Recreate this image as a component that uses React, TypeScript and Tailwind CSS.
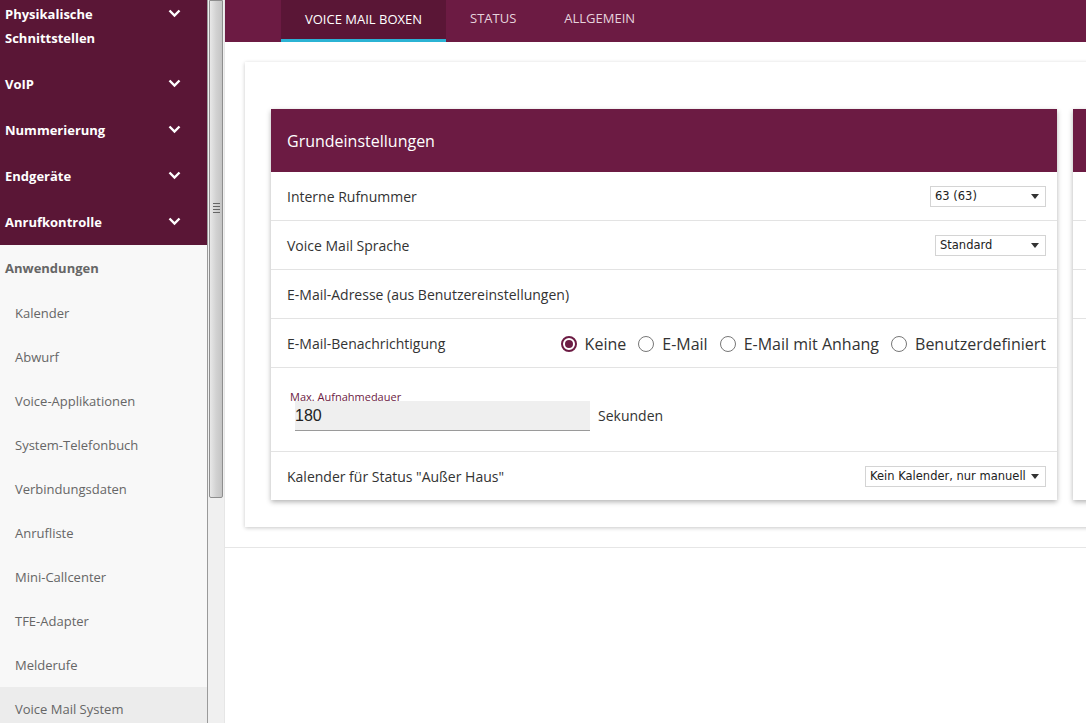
import React from "react";

const font = { fontFamily: '"Open Sans", "Noto Sans", sans-serif' };

const topItems = [
  { label: ["Physikalische", "Schnittstellen"] },
  { label: ["VoIP"] },
  { label: ["Nummerierung"] },
  { label: ["Endgeräte"] },
  { label: ["Anrufkontrolle"] },
];

const subItems = [
  "Kalender",
  "Abwurf",
  "Voice-Applikationen",
  "System-Telefonbuch",
  "Verbindungsdaten",
  "Anrufliste",
  "Mini-Callcenter",
  "TFE-Adapter",
  "Melderufe",
  "Voice Mail System",
];

function Chevron() {
  return (
    <svg width="13" height="9" viewBox="0 0 13 9" className="mt-[-7px]">
      <path d="M1.5 1.5 L6.5 6.5 L11.5 1.5" fill="none" stroke="white" strokeWidth="2.4" />
    </svg>
  );
}

function Select({ value, width }: { value: string; width: string }) {
  return (
    <div
      className={`flex h-[21px] items-center justify-between border border-[#d4d4d4] bg-white pl-[4px] pr-[6px] pt-[2px] leading-none text-[#222] ${width}`}
      style={{ fontFamily: '"DejaVu Sans", Verdana, sans-serif', fontSize: "11.5px" }}
    >
      <span>{value}</span>
      <svg width="8" height="5" viewBox="0 0 8 5" className="mb-[2px]">
        <path d="M0 0 L8 0 L4 5 Z" fill="#333" />
      </svg>
    </div>
  );
}

function Radio({ checked, label }: { checked?: boolean; label: string }) {
  return (
    <label className="flex items-center gap-[8px]">
      <span
        className={`flex h-[16px] w-[16px] items-center justify-center rounded-full border-2 ${
          checked ? "border-[#6c1b43]" : "border-[#777]"
        }`}
        style={{ borderWidth: checked ? 2 : 1.5 }}
      >
        {checked && <span className="h-[8px] w-[8px] rounded-full bg-[#6c1b43]" />}
      </span>
      <span className="text-[16px] text-[#333]">{label}</span>
    </label>
  );
}

function Row({ children, className = "" }: { children: React.ReactNode; className?: string }) {
  return (
    <div className={`flex items-center justify-between border-b border-[#e3e3e3] pl-[16px] pr-[11px] text-[14px] text-[#333] ${className}`}>
      {children}
    </div>
  );
}

export default function App() {
  return (
    <div className="flex h-screen w-full overflow-hidden bg-white" style={font}>
      {/* sidebar */}
      <aside className="flex w-[207px] shrink-0 flex-col overflow-hidden bg-[#f8f8f8]">
        <div className="-mt-[9px] bg-[#5a1636]">
          {topItems.map((it) => (
            <div key={it.label[0]} className="flex items-start justify-between py-[11px] pl-[5px] pr-[26px]">
              <div className="text-[13px] font-bold leading-[24px] text-white">
                {it.label.map((l) => (
                  <div key={l}>{l}</div>
                ))}
              </div>
              <div className="pt-[14px]">
                <Chevron />
              </div>
            </div>
          ))}
        </div>
        <div className="py-[11px] pl-[5px] text-[13px] font-bold leading-[24px] text-[#666]">Anwendungen</div>
        {subItems.map((s) => (
          <div
            key={s}
            className={`py-[10px] pl-[15px] text-[13px] leading-[24px] text-[#666] ${
              s === "Voice Mail System" ? "bg-[#ececec]" : ""
            }`}
          >
            {s}
          </div>
        ))}
      </aside>

      {/* scrollbar */}
      <div className="relative w-[18px] shrink-0 border-l border-[#9a9a9a] border-r border-r-[#e6e6e6] bg-[#f0f0f0]">
        <div className="mx-[1px] flex h-[498px] items-center justify-center rounded-b-[2px] border border-[#8e8e8e] bg-gradient-to-r from-[#e8e8e8] via-[#d2d2d2] to-[#c4c4c4]">
          <div className="mb-[82px] flex flex-col gap-[2px]">
            <div className="h-[1px] w-[7px] bg-[#666]" />
            <div className="h-[1px] w-[7px] bg-[#666]" />
            <div className="h-[1px] w-[7px] bg-[#666]" />
            <div className="h-[1px] w-[7px] bg-[#666]" />
          </div>
        </div>
      </div>

      {/* main */}
      <main className="flex min-w-0 flex-1 flex-col">
        <nav className="flex h-[42px] shrink-0 bg-[#6c1b43] pl-[56px] text-[13px]">
          <div className="flex h-full items-center border-b-[3px] border-[#2bb3d4] bg-[#5a1636] px-[24px] pt-[1px] text-white">
            VOICE MAIL BOXEN
          </div>
          <div className="flex h-full items-center px-[24px] pb-[4px] text-[#e6d3dc]">STATUS</div>
          <div className="flex h-full items-center px-[24px] pb-[4px] text-[#e6d3dc]">ALLGEMEIN</div>
        </nav>

        <div className="ml-[20px] mt-[20px] h-[465px] w-[900px] shrink-0 bg-white pl-[26px] pt-[47px] shadow-[0_1px_4px_rgba(0,0,0,0.22)]">
          <div className="flex gap-[16px]">
            <section className="w-[786px] shrink-0 bg-white shadow-[0_2px_5px_rgba(0,0,0,0.3)]">
              <header className="flex h-[63px] items-center bg-[#6c1b43] px-[16px] text-[16px] text-white">
                Grundeinstellungen
              </header>
              <Row className="h-[49px]">
                <span>Interne Rufnummer</span>
                <Select value="63 (63)" width="w-[116px]" />
              </Row>
              <Row className="h-[49px]">
                <span>Voice Mail Sprache</span>
                <Select value="Standard" width="w-[111px]" />
              </Row>
              <Row className="h-[49px]">
                <span>E-Mail-Adresse (aus Benutzereinstellungen)</span>
              </Row>
              <Row className="h-[49px]">
                <span>E-Mail-Benachrichtigung</span>
                <div className="flex items-center gap-[12px] pt-[2px]">
                  <Radio checked label="Keine" />
                  <Radio label="E-Mail" />
                  <Radio label="E-Mail mit Anhang" />
                  <Radio label="Benutzerdefiniert" />
                </div>
              </Row>
              <Row className="h-[84px] justify-start">
                <div className="flex items-end gap-[8px] pl-[3px] pt-[2px]">
                  <div className="relative w-[300px]">
                    <div className="mb-[-3px] text-[11px] leading-[14px] text-[#6c1b43]">Max. Aufnahmedauer</div>
                    <div
                      className="ml-[5px] flex h-[30px] w-[295px] items-center border-b border-[#9a9a9a] bg-[#efefef] text-[16px] text-[#222]"
                      style={{ fontFamily: '"Liberation Sans", Arial, sans-serif' }}
                    >
                      180
                    </div>
                  </div>
                  <span className="pb-[5px]">Sekunden</span>
                </div>
              </Row>
              <Row className="h-[48px] border-b-0">
                <span>Kalender für Status "Außer Haus"</span>
                <Select value="Kein Kalender, nur manuell" width="w-[181px]" />
              </Row>
            </section>
            <section className="h-[391px] w-[300px] shrink-0 bg-white shadow-[0_2px_5px_rgba(0,0,0,0.3)]">
              <div className="h-[63px] bg-[#6c1b43]" />
              <div className="h-[49px] border-b border-[#e3e3e3]" />
              <div className="h-[49px] border-b border-[#e3e3e3]" />
              <div className="h-[49px] border-b border-[#e3e3e3]" />
            </section>
          </div>
        </div>
        <div className="mt-[20px] h-[1px] w-full bg-[#e6e6e6]" />
      </main>
    </div>
  );
}
